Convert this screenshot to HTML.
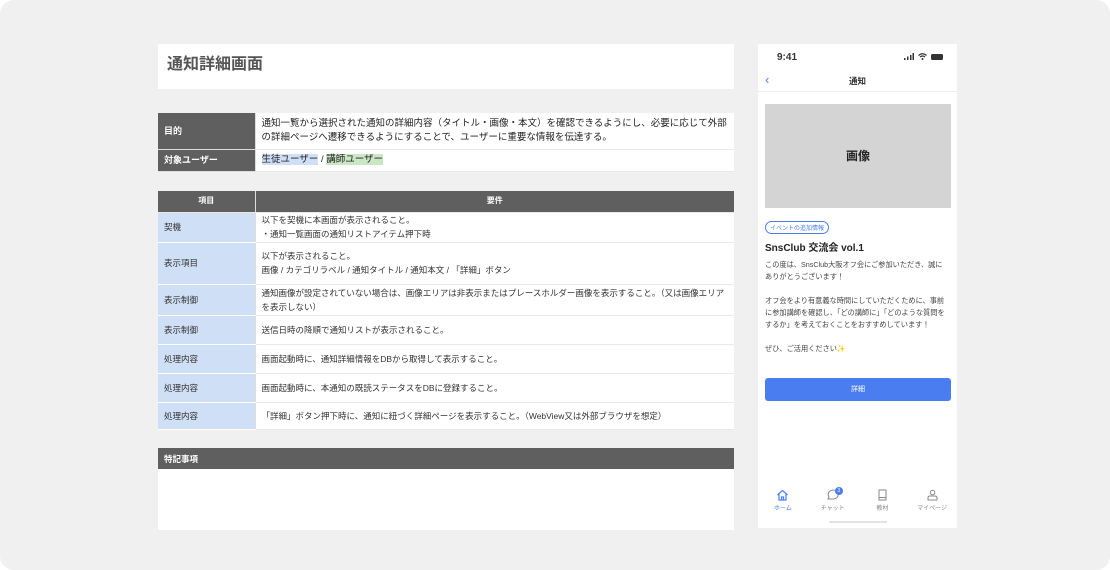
<!DOCTYPE html>
<html><head><meta charset="utf-8"><style>
*{margin:0;padding:0;box-sizing:border-box}
body{width:1110px;height:570px;background:#fff;font-family:"Liberation Sans","Noto Sans CJK JP",sans-serif;position:relative;overflow:hidden;color:#222}
.bg{position:absolute;left:0;top:0;width:1110px;height:570px;background:#f0f0f0;border-radius:14px}
.abs{position:absolute}
.title{left:158px;top:44px;width:576px;height:45px;background:#fff;font-size:16px;font-weight:bold;color:#555;padding:6px 9px}
table{border-collapse:collapse;position:absolute;left:158px;width:576px;font-size:9px}
td{border-bottom:1px solid #e8e8e8;padding:0 6px;vertical-align:middle;line-height:14px}
.lab{width:97px;background:#5f5f5f;color:#fff;font-weight:bold;border-right:1px solid #ddd;border-bottom:1px solid #ddd}
.val{background:#fff;font-size:9.5px}
.hd td{background:#5f5f5f;color:#fff;font-weight:bold;text-align:center;height:21px;font-size:8px}
.bl{width:97px;background:#cfdff6;color:#333;border-right:1px solid #ddd;border-bottom:1px solid #fff;font-size:8.5px}
.v2{background:#fff;font-size:8.5px;color:#333}
.phone{left:758px;top:44px;width:199px;height:484px;background:#fff}
</style></head><body>
<div class="bg"></div>
<div class="abs title">通知詳細画面</div>
<table style="top:113px">
<tr style="height:36px"><td class="lab">目的</td><td class="val">通知一覧から選択された通知の詳細内容（タイトル・画像・本文）を確認できるようにし、必要に応じて外部の詳細ページへ遷移できるようにすることで、ユーザーに重要な情報を伝達する。</td></tr>
<tr style="height:22px"><td class="lab">対象ユーザー</td><td class="val"><span style="background:#cfdff6">生徒ユーザー</span> / <span style="background:#cbe6c4">講師ユーザー</span></td></tr>
</table>
<table style="top:191px">
<tr class="hd"><td style="width:97px;border-right:1px solid #ddd">項目</td><td>要件</td></tr>
<tr style="height:30px"><td class="bl">契機</td><td class="v2">以下を契機に本画面が表示されること。<br>・通知一覧画面の通知リストアイテム押下時</td></tr>
<tr style="height:42px"><td class="bl">表示項目</td><td class="v2">以下が表示されること。<br>画像 / カテゴリラベル / 通知タイトル / 通知本文 / 「詳細」ボタン</td></tr>
<tr style="height:31px"><td class="bl">表示制御</td><td class="v2">通知画像が設定されていない場合は、画像エリアは非表示またはプレースホルダー画像を表示すること。（又は画像エリアを表示しない）</td></tr>
<tr style="height:29px"><td class="bl">表示制御</td><td class="v2">送信日時の降順で通知リストが表示されること。</td></tr>
<tr style="height:29px"><td class="bl">処理内容</td><td class="v2">画面起動時に、通知詳細情報をDBから取得して表示すること。</td></tr>
<tr style="height:29px"><td class="bl">処理内容</td><td class="v2">画面起動時に、本通知の既読ステータスをDBに登録すること。</td></tr>
<tr style="height:27px"><td class="bl">処理内容</td><td class="v2">「詳細」ボタン押下時に、通知に紐づく詳細ページを表示すること。（WebView又は外部ブラウザを想定）</td></tr>
</table>
<div class="abs" style="left:158px;top:448px;width:576px;height:21px;background:#5f5f5f;color:#fff;font-size:8.5px;font-weight:bold;padding:5px 6px">特記事項</div>
<div class="abs" style="left:158px;top:469px;width:576px;height:61px;background:#fff"></div>

<div class="abs phone">
<div class="abs" style="left:19px;top:8px;font-size:10px;font-weight:bold;color:#333">9:41</div>
<div class="abs" style="left:146px;top:9px;display:flex;gap:4px;align-items:flex-end">
<svg width="10" height="7"><rect x="0" y="5" width="1.5" height="2" fill="#333"/><rect x="3" y="3.5" width="1.5" height="3.5" fill="#333"/><rect x="6" y="2" width="1.5" height="5" fill="#333"/><rect x="8.5" y="0" width="1.5" height="7" fill="#333"/></svg>
<svg width="9" height="7"><path d="M0.5 2.5 Q4.5 -1 8.5 2.5 M2 4 Q4.5 2 7 4" stroke="#333" fill="none" stroke-width="1.2"/><circle cx="4.5" cy="6" r="1" fill="#333"/></svg>
<div style="width:12px;height:6px;background:#333;border-radius:1.5px"></div></div>
<div class="abs" style="left:7px;top:28px;color:#4a7ef0;font-size:13px">‹</div>
<div class="abs" style="left:0;width:199px;top:31px;text-align:center;font-size:8.5px;font-weight:bold;color:#333">通知</div>
<div class="abs" style="left:0;top:47px;width:199px;height:1px;background:#eee"></div>
<div class="abs" style="left:7px;top:60px;width:186px;height:104px;background:#d4d4d4;text-align:center;line-height:104px;font-size:12px;font-weight:bold;color:#222">画像</div>
<div class="abs" style="left:7px;top:177px;border:1px solid #4a7ef0;border-radius:7px;color:#4a7ef0;font-size:6px;padding:1px 4px">イベントの追加情報</div>
<div class="abs" style="left:7px;top:195px;font-size:10px;font-weight:bold;color:#222">SnsClub 交流会 vol.1</div>
<div class="abs" style="left:7px;top:215px;width:184px;font-size:7.2px;line-height:12px;color:#444">この度は、SnsClub大阪オフ会にご参加いただき、誠にありがとうございます！<br><br>オフ会をより有意義な時間にしていただくために、事前に参加講師を確認し、「どの講師に」「どのような質問をするか」を考えておくことをおすすめしています！<br><br>ぜひ、ご活用ください✨</div>
<div class="abs" style="left:7px;top:334px;width:186px;height:23px;background:#4a7ef0;border-radius:3px;color:#fff;font-size:7px;text-align:center;line-height:23px">詳細</div>
<div class="abs" style="left:0;top:445px;width:199px;display:flex;font-size:6px;color:#888;text-align:center">
<div style="flex:1;color:#4a7ef0"><svg width="13" height="12" viewBox="0 0 13 12"><path d="M1.5 6 L6.5 1.5 L11.5 6 M3 5 V11 H10 V5 M5.5 11 V8 H7.5 V11" stroke="#4a7ef0" fill="none" stroke-width="1.2"/></svg><br>ホーム</div>
<div style="flex:1;position:relative"><svg width="13" height="12" viewBox="0 0 13 12"><path d="M2 10 L3 8 A5 4.5 0 1 1 6.5 10 Z" stroke="#888" fill="none" stroke-width="1"/></svg><span style="position:absolute;left:27px;top:-2px;width:8px;height:8px;border-radius:4px;background:#4a7ef0;color:#fff;font-size:5px;line-height:8px">3</span><br>チャット</div>
<div style="flex:1"><svg width="13" height="12" viewBox="0 0 13 12"><rect x="3" y="1" width="7" height="10" stroke="#888" fill="none"/><path d="M3 8.5 H10" stroke="#888"/></svg><br>教材</div>
<div style="flex:1"><svg width="13" height="12" viewBox="0 0 13 12"><circle cx="6.5" cy="3.5" r="2.3" stroke="#888" fill="none"/><path d="M2 11 V9 Q2 7 4 7 H9 Q11 7 11 9 V11 Z" stroke="#888" fill="none"/></svg><br>マイページ</div>
</div>
<div class="abs" style="left:71px;top:477px;width:58px;height:2px;background:#e2e2e2;border-radius:1px"></div>
</div>
</body></html>
